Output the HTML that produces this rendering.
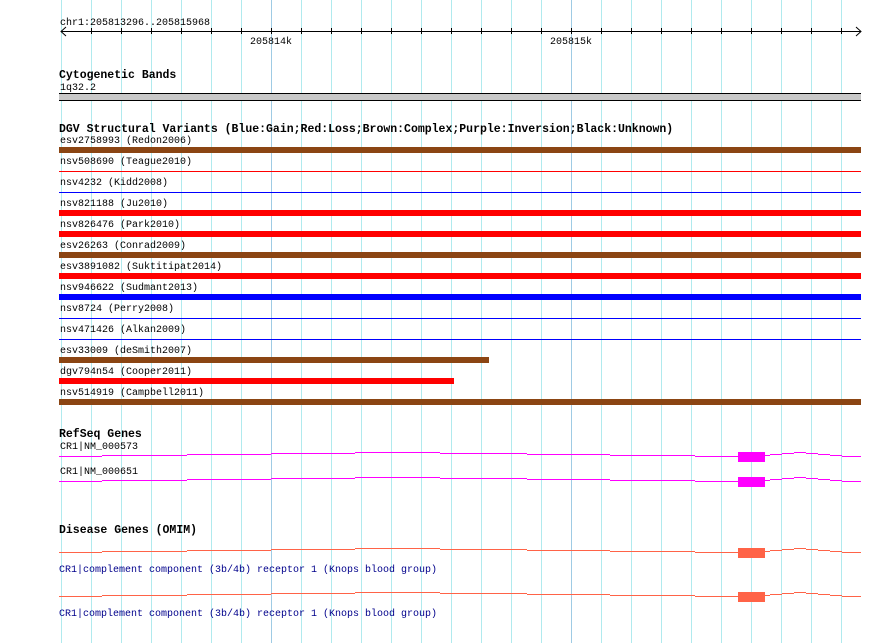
<!DOCTYPE html>
<html><head><meta charset="utf-8"><style>
html,body{margin:0;padding:0;background:#fff}
svg{display:block}
text{font-family:"Liberation Mono","DejaVu Sans Mono",monospace;font-size:10px}
.t{font-weight:bold;font-size:11.5px}
</style></head><body>
<svg width="890" height="643" xmlns="http://www.w3.org/2000/svg" shape-rendering="crispEdges">
<rect width="890" height="643" fill="#fff"/>
<g id="grid"></g>
<g id="content"></g>
<text x="60" y="25">chr1:205813296..205815968</text>
<text x="271" y="44" text-anchor="middle">205814k</text>
<text x="571" y="44" text-anchor="middle">205815k</text>
<text x="59" y="78" class="t">Cytogenetic Bands</text>
<text x="60" y="90">1q32.2</text>
<rect x="59" y="93" width="802" height="8" fill="#000"/>
<rect x="59" y="94" width="802" height="6" fill="#c8c8c8"/>
<text x="59" y="132" class="t">DGV Structural Variants (Blue:Gain;Red:Loss;Brown:Complex;Purple:Inversion;Black:Unknown)</text>
<text x="60" y="143">esv2758993 (Redon2006)</text>
<text x="60" y="164">nsv508690 (Teague2010)</text>
<text x="60" y="185">nsv4232 (Kidd2008)</text>
<text x="60" y="206">nsv821188 (Ju2010)</text>
<text x="60" y="227">nsv826476 (Park2010)</text>
<text x="60" y="248">esv26263 (Conrad2009)</text>
<text x="60" y="269">esv3891082 (Suktitipat2014)</text>
<text x="60" y="290">nsv946622 (Sudmant2013)</text>
<text x="60" y="311">nsv8724 (Perry2008)</text>
<text x="60" y="332">nsv471426 (Alkan2009)</text>
<text x="60" y="353">esv33009 (deSmith2007)</text>
<text x="60" y="374">dgv794n54 (Cooper2011)</text>
<text x="60" y="395">nsv514919 (Campbell2011)</text>
<text x="59" y="437" class="t">RefSeq Genes</text>
<text x="60" y="449">CR1|NM_000573</text>
<text x="60" y="474">CR1|NM_000651</text>
<text x="59" y="533" class="t">Disease Genes (OMIM)</text>
<text x="59" y="572" fill="#00008b">CR1|complement component (3b/4b) receptor 1 (Knops blood group)</text>
<text x="59" y="616" fill="#00008b">CR1|complement component (3b/4b) receptor 1 (Knops blood group)</text>
</svg>
<script>
var ns="http://www.w3.org/2000/svg";
function r(g,x,y,w,h,f){var e=document.createElementNS(ns,"rect");e.setAttribute("x",x);e.setAttribute("y",y);e.setAttribute("width",w);e.setAttribute("height",h);e.setAttribute("fill",f);g.appendChild(e);}
var grid=document.getElementById("grid"),c=document.getElementById("content");
for(var x=61;x<=861;x+=30){r(grid,x,0,1,643,(x==271||x==571)?"#9fcbe4":"#b0eaee");}
r(c,61,31,800,1,"#000");
for(var x=91;x<861;x+=30){r(c,x,28,1,6,"#000");}
var p=document.createElementNS(ns,"path");p.setAttribute("d","M66 27 L61 31.5 L66 36 M856 27 L861 31.5 L856 36");p.setAttribute("stroke","#000");p.setAttribute("fill","none");p.setAttribute("shape-rendering","auto");c.appendChild(p);
var B="#8b4513",R="#ff0000",U="#0000ff";
var bars=[[B,1,861],[R,0,861],[U,0,861],[R,1,861],[R,1,861],[B,1,861],[R,1,861],[U,1,861],[U,0,861],[U,0,861],[B,1,489],[R,1,454],[B,1,861]];
bars.forEach(function(b,i){var cy=150+21*i;if(b[1])r(c,59,cy-3,b[2]-59,6,b[0]);else r(c,59,cy,b[2]-59,1,b[0]);});
var segs=[[59,102,0],[102,187,-1],[187,271,-2],[271,355,-3],[355,440,-4],[440,527,-3],[527,610,-2],[610,695,-1],[695,738,0],[765,770,-1],[770,782,-2],[782,794,-3],[794,806,-4],[806,818,-3],[818,830,-2],[830,842,-1],[842,861,0]];
function gene(y0,col){segs.forEach(function(s){r(c,s[0],y0+s[2],s[1]-s[0],1,col);});r(c,738,y0-4,27,10,col);}
gene(456,"#ff00ff");gene(481,"#ff00ff");gene(552,"#ff6347");gene(596,"#ff6347");
</script>
</body></html>
